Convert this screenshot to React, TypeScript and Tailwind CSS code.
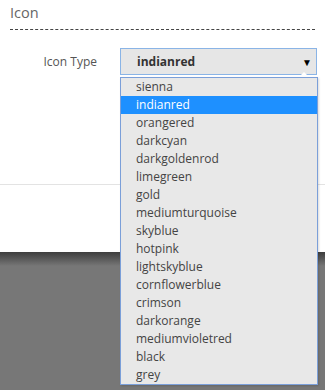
import React from "react";

const items = [
  "sienna",
  "indianred",
  "orangered",
  "darkcyan",
  "darkgoldenrod",
  "limegreen",
  "gold",
  "mediumturquoise",
  "skyblue",
  "hotpink",
  "lightskyblue",
  "cornflowerblue",
  "crimson",
  "darkorange",
  "mediumvioletred",
  "black",
  "grey",
];

export default function App() {
  return (
    <div
      className="relative w-[325px] h-[390px] overflow-hidden bg-[#777777]"
      style={{ fontFamily: '"Open Sans", "Noto Sans", sans-serif' }}
    >
      <div className="h-[252px] bg-white flex flex-col">
        <div className="px-[10px] pt-[3px] text-[14.5px] leading-[20px] text-[#666]">Icon</div>
        <div className="mx-[10px] mt-[6px] border-t border-dashed border-[#444]" />
        <div className="flex items-center mt-[18px] h-[27px]">
          <div className="w-[97px] text-right text-[12px] text-[#555] leading-[18px]">Icon Type</div>
          <div className="ml-[23px] w-[197px] h-[27px] border border-[#8ab4e6] bg-[#e6e6e6] flex items-center justify-between pl-[16px] pr-[4px]">
            <span className="text-[12px] font-bold text-[#333] leading-[18px]">indianred</span>
            <span className="text-[10px] text-black leading-none">▼</span>
          </div>
        </div>
        <div className="mt-[109px] border-t border-[#e3e3e3]" />
      </div>
      <div className="h-[14px] bg-gradient-to-b from-[#3e3e3e] to-[#777777]" />
      <div className="absolute left-[120px] top-[77px] w-[198px] border border-[#7b9fd9] bg-[#e8e8e8] shadow-[1px_1px_2px_rgba(0,0,0,0.15)]">
        {items.map((it) => (
          <div
            key={it}
            className={
              it === "indianred"
                ? "h-[18px] leading-[18px] pl-[15px] text-[12px] bg-[#1e90ff] text-white"
                : "h-[18px] leading-[18px] pl-[15px] text-[12px] text-[#444]"
            }
          >
            {it}
          </div>
        ))}
      </div>
      <div className="absolute left-[300px] top-[72px] w-0 h-0 border-l-[4px] border-r-[4px] border-b-[4px] border-l-transparent border-r-transparent border-b-white" />
    </div>
  );
}
